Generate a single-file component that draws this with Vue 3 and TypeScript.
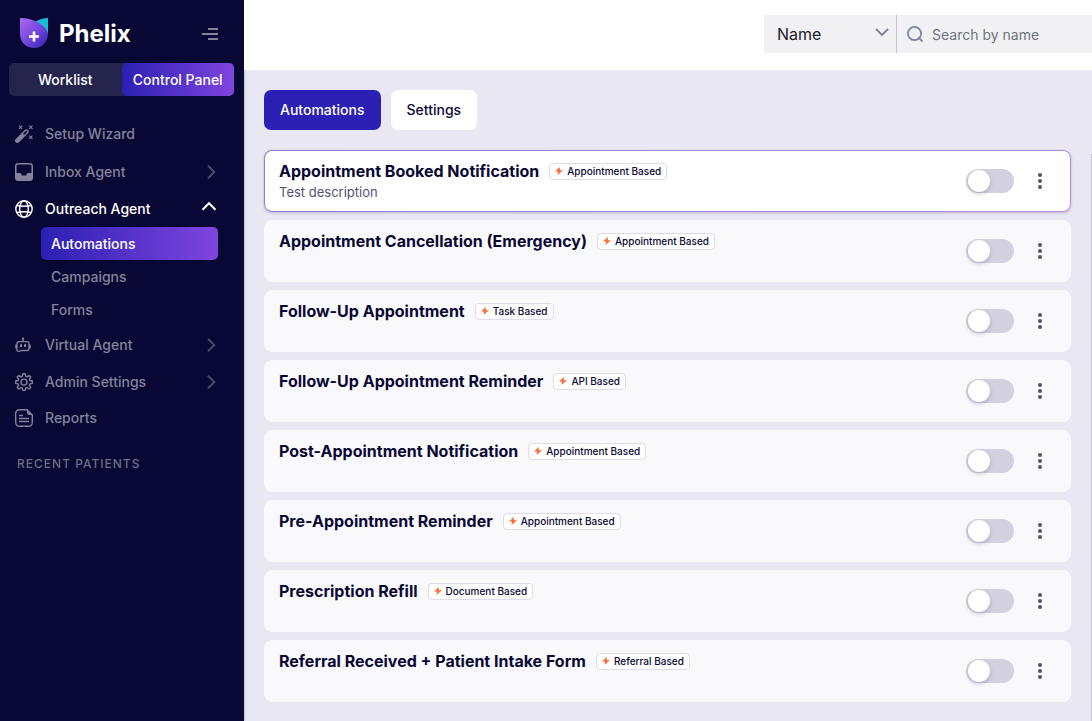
<script setup lang="ts">
import { ref } from 'vue'

interface Automation {
  title: string
  basis: string
  description?: string
}

const automations: Automation[] = [
  { title: 'Appointment Booked Notification', basis: 'Appointment Based', description: 'Test description' },
  { title: 'Appointment Cancellation (Emergency)', basis: 'Appointment Based' },
  { title: 'Follow-Up Appointment', basis: 'Task Based' },
  { title: 'Follow-Up Appointment Reminder', basis: 'API Based' },
  { title: 'Post-Appointment Notification', basis: 'Appointment Based' },
  { title: 'Pre-Appointment Reminder', basis: 'Appointment Based' },
  { title: 'Prescription Refill', basis: 'Document Based' },
  { title: 'Referral Received + Patient Intake Form', basis: 'Referral Based' },
]

const enabled = ref<boolean[]>(automations.map(() => false))
const selected = ref(0)
const field = ref('Name')
const query = ref('')
</script>

<template>
  <div class="app">
    <aside class="sidebar">
      <div class="brand">
        <svg class="logo" width="28" height="32" viewBox="0 0 28 32" aria-hidden="true">
          <defs>
            <linearGradient id="shield" x1="0" y1="0" x2="1" y2="1">
              <stop offset="0" stop-color="#ad68f8" />
              <stop offset="0.55" stop-color="#6f45d8" />
              <stop offset="1" stop-color="#2c20b4" />
            </linearGradient>
          </defs>
          <path d="M28 0v16L14 5Q20 0 28 0Z" fill="#18bdd6" />
          <path d="M0 0C13 0 25 6 28 15.500C28 24 22 30 14 30S0 24 0 16Z" fill="url(#shield)" />
          <path d="M14 13.500v10M9 18.500h10" stroke="#fff" stroke-width="2.600" />
        </svg>
        <span class="name">Phelix</span>
        <button class="collapse" type="button" aria-label="Collapse menu">
          <svg width="16" height="12" viewBox="0 0 16 12"><path d="M6 1h10M0 6h16M6 11h10" stroke="#84839b" stroke-width="2" /></svg>
        </button>
      </div>

      <div class="mode">
        <button type="button">Worklist</button>
        <button type="button" class="on">Control Panel</button>
      </div>

      <nav>
        <a href="#wizard" class="item">
          <svg width="18" height="18" viewBox="0 0 18 18">
            <path d="M2.400 15.600L11.400 6.600" stroke="currentColor" stroke-width="4.600" stroke-linecap="round" />
            <path d="M9.200 8.800L11.400 6.600" stroke="#090834" stroke-width="1.800" stroke-linecap="round" />
            <path d="M4 .6l3.200 3.200M7.200 .6l-3.200 3.200M14.200 .6l3.200 3.200M17.400 .6l-3.200 3.200M14.200 10.600l3.200 3.200M17.400 10.600l-3.200 3.200" stroke="currentColor" stroke-width="1.100" />
          </svg>
          <span>Setup Wizard</span>
        </a>
        <a href="#inbox" class="item">
          <svg width="18" height="18" viewBox="0 0 18 18">
            <rect x=".75" y=".75" width="16.500" height="16.500" rx="2.500" fill="none" stroke="currentColor" stroke-width="1.500" />
            <path d="M1 10h4.500l1.500 2.500h4L12.500 10H17v5a2 2 0 0 1-2 2H3a2 2 0 0 1-2-2Z" fill="currentColor" />
          </svg>
          <span>Inbox Agent</span>
          <svg class="arrow" width="18" height="14" viewBox="0 0 18 14"><path d="M7 .7L13.300 7L7 13.300" /></svg>
        </a>
        <a href="#outreach" class="item open">
          <svg width="18" height="18" viewBox="0 0 18 18" fill="none" stroke="currentColor" stroke-width="1.400">
            <circle cx="9" cy="9" r="8.200" />
            <ellipse cx="9" cy="9" rx="4.300" ry="8.200" />
            <path d="M1.800 5.500q7.200 1.500 14.400 0M1.800 12.500q7.200-1.500 14.400 0" />
          </svg>
          <span>Outreach Agent</span>
          <svg class="arrow" width="18" height="18" viewBox="0 0 18 18"><path d="M1.500 9.700L8 3.200L14.500 9.700" /></svg>
        </a>
        <div class="sub">
          <a href="#automations" class="on">Automations</a>
          <a href="#campaigns">Campaigns</a>
          <a href="#forms">Forms</a>
        </div>
        <a href="#virtual" class="item">
          <svg width="18" height="18" viewBox="0 0 18 18" fill="none" stroke="currentColor" stroke-width="1.300">
            <path d="M4 5.700h8a2 2 0 0 1 2 2v4.800a2 2 0 0 1-2 2H6.500L3.800 15.500L2 14.500V7.700a2 2 0 0 1 2-2ZM8 5.500V3.500M6.500 14.500l2 0M.9 8.500v4M15.100 8.500v4" />
            <circle cx="8" cy="2.700" r="1.200" fill="currentColor" stroke="none" />
            <path d="M6 8.200v2.800M10 8.200v2.800" stroke-width="2" />
          </svg>
          <span>Virtual Agent</span>
          <svg class="arrow" width="18" height="14" viewBox="0 0 18 14"><path d="M7 .7L13.300 7L7 13.300" /></svg>
        </a>
        <a href="#admin" class="item">
          <svg width="18" height="18" viewBox="0 0 18 18" fill="none" stroke="currentColor" stroke-width="1.400" stroke-linejoin="round">
            <path d="M7.800 .8h2.400l.5 2.500 1.300.5 2.100-1.400 1.700 1.700-1.400 2.100.5 1.300 2.500.5v2.400l-2.500.5-.5 1.300 1.400 2.100-1.700 1.700-2.100-1.400-1.300.5-.5 2.300H7.800l-.5-2.300-1.300-.5-2.100 1.400-1.700-1.700 1.400-2.100-.5-1.300-2.500-.5V8l2.500-.5.500-1.300-1.400-2.100 1.700-1.700 2.100 1.400 1.300-.5Z" />
            <circle cx="9" cy="9.100" r="3" />
          </svg>
          <span>Admin Settings</span>
          <svg class="arrow" width="18" height="14" viewBox="0 0 18 14"><path d="M7 .7L13.300 7L7 13.300" /></svg>
        </a>
        <a href="#reports" class="item">
          <svg width="18" height="18" viewBox="0 0 18 18" fill="none" stroke="currentColor" stroke-width="1.400">
            <path d="M12 .7H4.500A3.800 3.800 0 0 0 .7 4.500v9a3.800 3.800 0 0 0 3.800 3.800h9a3.800 3.800 0 0 0 3.800-3.800V6Z" />
            <path d="M12 .5v3a2.500 2.500 0 0 0 2.500 2.500h3Z" fill="currentColor" stroke="none" />
            <path d="M4 6.500h4M4 9.500h10M4 12.500h10" />
          </svg>
          <span>Reports</span>
        </a>
      </nav>
      <h2 class="recent">RECENT PATIENTS</h2>
    </aside>

    <div class="page">
      <header class="top">
        <div class="pick">
          <select v-model="field" aria-label="Search field">
            <option>Name</option>
            <option>Phone</option>
          </select>
          <svg width="14" height="12" viewBox="0 0 14 12"><path d="M1 1l6 6 6-6" fill="none" stroke="#7d7c9f" stroke-width="1.800" /></svg>
        </div>
        <label class="search">
          <svg width="16" height="16" viewBox="0 0 16 16" fill="none" stroke="#7d83a3" stroke-width="1.800"><circle cx="7.500" cy="7.500" r="6.600" /><path d="M11.500 11.500l4 4" /></svg>
          <input v-model="query" type="text" placeholder="Search by name" aria-label="Search by name" />
        </label>
      </header>

      <div class="body">
        <main>
          <div class="tabs">
            <button type="button" class="on">Automations</button>
            <button type="button">Settings</button>
          </div>
          <ul class="list">
            <li v-for="(a, i) in automations" :key="a.title" class="card" :class="{ selected: i === selected }" @mouseenter="selected = i">
              <div class="info">
                <div class="head">
                  <h3>{{ a.title }}</h3>
                  <span class="badge">
                    <svg width="8" height="8" viewBox="0 0 8 8"><path d="M4.700 0L0 4.600h2.900L2.600 8L8 3.200H4.900Z" fill="#f4703a" /></svg>
                    {{ a.basis }}
                  </span>
                </div>
                <p v-if="a.description">{{ a.description }}</p>
              </div>
              <input v-model="enabled[i]" class="switch" type="checkbox" role="switch" :aria-label="'Enable ' + a.title" />
              <button class="more" type="button" :aria-label="'Options for ' + a.title">
                <svg width="4" height="16" viewBox="0 0 4 16" fill="#54526f"><circle cx="2" cy="2" r="2" /><circle cx="2" cy="8" r="2" /><circle cx="2" cy="14" r="2" /></svg>
              </button>
            </li>
          </ul>
        </main>
        <div class="rail"></div>
      </div>
    </div>
  </div>
</template>

<style>
body {
  background: #e9e7f2;
}
</style>

<style scoped>
* {
  box-sizing: border-box;
}
.app {
  display: flex;
  min-height: 100vh;
  font-family: Inter, "Liberation Sans", sans-serif;
  font-size: 14px;
  line-height: 20px;
  color: #090834;
}
button {
  border: 0;
  padding: 0;
  background: none;
  font: inherit;
  color: inherit;
}
svg {
  display: block;
  flex: none;
}
a {
  color: inherit;
  text-decoration: none;
}
.sidebar {
  width: 244px;
  flex: none;
  background: #090834;
  color: #84839b;
  font-weight: 500;
  box-shadow: 0 0 3px rgba(9, 8, 52, 0.3);
}
.brand {
  display: flex;
  align-items: center;
  height: 63px;
  padding: 4px 26px 0 20px;
}
.name {
  margin-left: 11px;
  font-size: 24px;
  line-height: 30px;
  font-weight: 700;
  color: #fff;
}
.collapse {
  margin-left: auto;
}
.mode {
  display: grid;
  grid-template-columns: 1fr 1fr;
  height: 33px;
  margin: 0 10px 19px 9px;
  border-radius: 5px;
  background: #25244c;
  color: #fff;
}
.mode .on {
  border-radius: 5px;
}
.mode .on,
.sub .on {
  background: linear-gradient(90deg, #2b20b3, #7f45de);
  color: #fff;
}
.item {
  display: flex;
  align-items: center;
  gap: 12px;
  height: 37px;
  padding: 0 25px 0 15px;
}
.item:first-child {
  height: 38px;
}
.item:last-child {
  height: 36px;
}
.item.open {
  color: #fff;
}
.arrow {
  margin-left: auto;
  fill: none;
  stroke: #4a4969;
  stroke-width: 2;
}
.open .arrow {
  stroke: #fff;
}
.sub {
  display: flex;
  flex-direction: column;
  margin: 0 26px 0 41px;
}
.sub a {
  padding: 7px 10px 6px;
  border-radius: 5px;
}
.recent {
  margin: 18px 0 0 17px;
  font-size: 12px;
  line-height: 20px;
  font-weight: 500;
  letter-spacing: 1px;
  color: #6e6d87;
}
.page {
  flex: 1;
  min-width: 0;
  display: flex;
  flex-direction: column;
}
.top {
  display: flex;
  justify-content: flex-end;
  height: 70px;
  padding: 15px 0 17px;
  background: #fff;
}
.pick {
  display: flex;
  align-items: center;
  width: 133px;
  padding-right: 7px;
  background: #f1f1f4;
  border-right: 1px solid #c5c3d3;
}
select {
  flex: 1;
  min-width: 0;
  height: 38px;
  padding: 0 0 0 13px;
  border: 0;
  appearance: none;
  background: none;
  font: 16px Inter, sans-serif;
  color: #212028;
}
.search {
  display: flex;
  align-items: center;
  gap: 9px;
  width: 195px;
  padding-left: 10px;
  background: #f1f1f4;
}
.search input {
  flex: 1;
  min-width: 0;
  border: 0;
  padding: 0;
  outline: 0;
  background: none;
  font: 14px Inter, sans-serif;
}
.search input::placeholder {
  color: #6c757d;
}
.body {
  flex: 1;
  display: flex;
}
main {
  flex: 1;
  min-width: 0;
  padding: 20px 20px 19px;
}
.rail {
  width: 1px;
  margin-top: 84px;
  background: #c4c3cf;
}
.tabs {
  display: flex;
  gap: 10px;
  margin-bottom: 20px;
}
.tabs button {
  padding: 10px 16px;
  border-radius: 7px;
  background: #fff;
  font-weight: 500;
}
.tabs .on {
  background: #2b20b3;
  color: #fff;
}
.list {
  display: grid;
  gap: 8px;
  margin: 0;
  padding: 0;
  list-style: none;
}
.card {
  display: flex;
  align-items: center;
  min-height: 62px;
  padding: 0 28px 0 14px;
  border: 1px solid #f9f9fc;
  border-radius: 8px;
  background: #f9f9fc;
}
.card.selected {
  border-color: transparent;
  background: linear-gradient(#fff, #fff) padding-box, linear-gradient(90deg, #8b81d4, #b48df0) border-box;
  box-shadow: 0 1px 3px rgba(9, 8, 52, 0.2);
}
.info {
  flex: 1;
  align-self: flex-start;
  padding-top: 10px;
}
.head {
  display: flex;
  align-items: center;
  gap: 10px;
}
h3 {
  margin: 0;
  font-size: 16px;
  line-height: 20px;
  font-weight: 700;
}
.badge {
  display: flex;
  align-items: center;
  gap: 4px;
  padding: 0 5px;
  border: 1px solid #dddce8;
  border-radius: 4px;
  background: #fff;
  font-size: 10px;
  line-height: 15px;
  font-weight: 500;
}
.info p {
  margin: 2px 0 0;
  font-size: 13px;
  line-height: 18px;
  color: #54526f;
}
.switch {
  appearance: none;
  display: flex;
  align-items: center;
  width: 48px;
  height: 24px;
  margin: 0;
  padding: 0 2px;
  border-radius: 12px;
  background: #d3d1e0;
}
.switch::before {
  content: "";
  width: 22px;
  height: 22px;
  border-radius: 50%;
  background: #fff;
  box-shadow: 0 2px 4px rgba(9, 8, 52, 0.2);
}
.switch:checked {
  justify-content: flex-end;
  background: #2b20b3;
}
.more {
  margin-left: 24px;
  padding: 4px 0;
}
</style>
